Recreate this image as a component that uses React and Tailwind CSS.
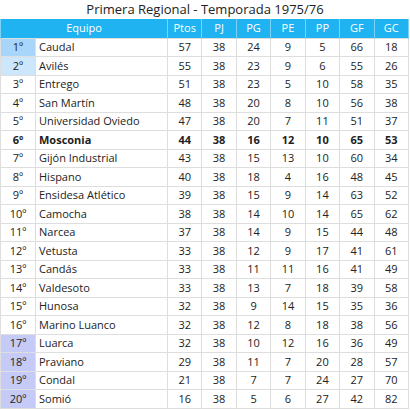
const rows = [
  [1, "Caudal", 57, 38, 24, 9, 5, 66, 18],
  [2, "Avilés", 55, 38, 23, 9, 6, 55, 26],
  [3, "Entrego", 51, 38, 23, 5, 10, 58, 35],
  [4, "San Martín", 48, 38, 20, 8, 10, 56, 38],
  [5, "Universidad Oviedo", 47, 38, 20, 7, 11, 51, 37],
  [6, "Mosconia", 44, 38, 16, 12, 10, 65, 53],
  [7, "Gijón Industrial", 43, 38, 15, 13, 10, 60, 34],
  [8, "Hispano", 40, 38, 18, 4, 16, 48, 45],
  [9, "Ensidesa Atlético", 39, 38, 15, 9, 14, 63, 52],
  [10, "Camocha", 38, 38, 14, 10, 14, 65, 62],
  [11, "Narcea", 37, 38, 14, 9, 15, 44, 48],
  [12, "Vetusta", 33, 38, 12, 9, 17, 41, 61],
  [13, "Candás", 33, 38, 11, 11, 16, 41, 49],
  [14, "Valdesoto", 33, 38, 13, 7, 18, 39, 58],
  [15, "Hunosa", 32, 38, 9, 14, 15, 35, 36],
  [16, "Marino Luanco", 32, 38, 12, 8, 18, 38, 56],
  [17, "Luarca", 32, 38, 10, 12, 16, 36, 49],
  [18, "Praviano", 29, 38, 11, 7, 20, 28, 57],
  [19, "Condal", 21, 38, 7, 7, 24, 27, 70],
  [20, "Somió", 16, 38, 5, 6, 27, 42, 82],
];

const heads = ["Ptos", "PJ", "PG", "PE", "PP", "GF", "GC"];

function posBg(p) {
  if (p === 1) return "bg-[#a8d5fa]";
  if (p === 2) return "bg-[#cce7fc]";
  if (p >= 17) return "bg-[#c6caf6]";
  return "bg-white";
}

export default function App() {
  return (
    <div className="w-[410px] h-[410px] bg-white font-['Open_Sans',sans-serif] text-[#222]">
      <div className="h-[19px] text-center text-[13px] leading-[19px]">
        Primera Regional - Temporada 1975/76
      </div>
      <table className="w-[409px] border-collapse table-fixed text-[11px]">
        <colgroup>
          <col className="w-[35px]" />
          <col className="w-[132px]" />
          {heads.map((h) => (
            <col key={h} />
          ))}
        </colgroup>
        <thead>
          <tr className="h-[19px] bg-[#1fb3f2] text-white">
            <th colSpan={2} className="font-normal border-x border-[#7fd2f7]">Equipo</th>
            {heads.map((h) => (
              <th key={h} className="font-normal border-x border-[#7fd2f7]">{h}</th>
            ))}
          </tr>
        </thead>
        <tbody>
          {rows.map((r) => {
            const bold = r[0] === 6 ? "font-bold" : "";
            return (
              <tr key={r[0]} className={`h-[18.5px] leading-[14px] ${bold}`}>
                <td className={`border border-[#dedede] text-center ${posBg(r[0])}`}>{r[0]}º</td>
                <td className="border border-[#dedede] pl-[3px] whitespace-nowrap">{r[1]}</td>
                {r.slice(2).map((v, i) => (
                  <td key={i} className="border border-[#dedede] text-center">{v}</td>
                ))}
              </tr>
            );
          })}
        </tbody>
      </table>
    </div>
  );
}
